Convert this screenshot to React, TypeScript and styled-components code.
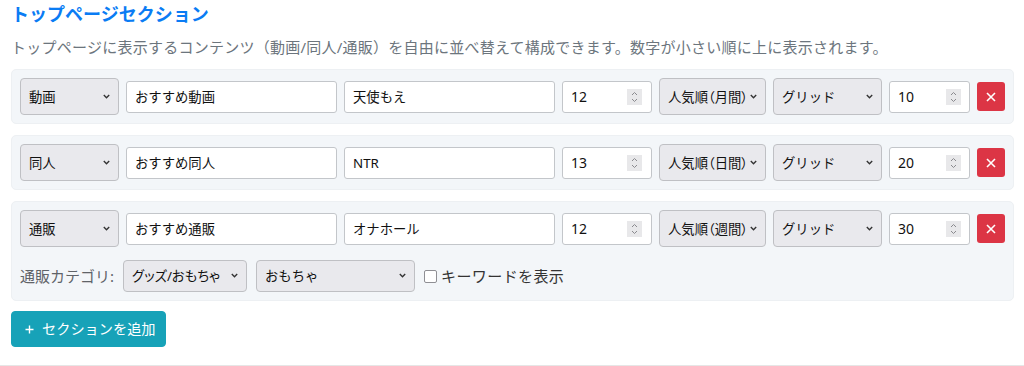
import React from "react";
import styled, { createGlobalStyle } from "styled-components";

const GlobalStyle = createGlobalStyle`
  html, body { margin: 0; padding: 0; background: #fff; }
  body { font-family: "Noto Sans", "Noto Sans CJK JP", sans-serif; color: #212529; }
  * { box-sizing: border-box; }
`;

const Page = styled.section`
  width: 1024px;
  padding: 0 10px 18px 11px;
  border-bottom: 1px solid #e6e6e6;
`;

const Title = styled.h2`
  margin: 0;
  font-size: 18px;
  line-height: 28px;
  font-weight: 700;
  color: #0a7cf4;
`;

const Description = styled.p`
  margin: 8px 0 10px;
  font-size: 15px;
  line-height: 23px;
  letter-spacing: 0.25px;
  color: #6c757d;
`;

const CardList = styled.div`
  display: flex;
  flex-direction: column;
  gap: 11px;
`;

const Card = styled.div`
  display: flex;
  flex-direction: column;
  gap: 13px;
  padding: 8px;
  background: #f3f6f9;
  border: 1px solid #edf0f3;
  border-radius: 5px;
`;

const Row = styled.div<{ $gap?: number }>`
  display: flex;
  align-items: center;
  gap: ${(p) => p.$gap ?? 7}px;
`;

const SelectWrap = styled.span<{ $w: number; $h?: number }>`
  position: relative;
  display: inline-flex;
  flex: none;
  width: ${(p) => p.$w}px;
  height: ${(p) => p.$h ?? 37}px;
`;

const Select = styled.select<{ $palt?: boolean }>`
  appearance: none;
  -webkit-appearance: none;
  width: 100%;
  height: 100%;
  padding: 0 14px 0 8px;
  background: #e9e9ed;
  border: 1px solid #bfc0c4;
  border-radius: 4px;
  font-family: "Noto Sans", "Noto Sans CJK JP", sans-serif;
  font-size: 13.33px;
  font-feature-settings: ${(p) => (p.$palt ? '"palt"' : "normal")};
  color: #111;
  outline: none;
`;

const Chevron = styled.svg`
  position: absolute;
  right: 9px;
  top: 50%;
  width: 7px;
  height: 5px;
  margin-top: -3px;
  pointer-events: none;
`;

const TextInput = styled.input<{ $w: number }>`
  flex: none;
  width: ${(p) => p.$w}px;
  height: 32px;
  padding: 0 8px;
  background: #fff;
  border: 1px solid #c3c6ca;
  border-radius: 3px;
  font-family: "Noto Sans", "Noto Sans CJK JP", sans-serif;
  font-size: 13.33px;
  color: #111;
  outline: none;
`;

const NumberWrap = styled.span<{ $w: number }>`
  position: relative;
  display: inline-flex;
  flex: none;
  width: ${(p) => p.$w}px;
  height: 32px;
`;

const NumberInput = styled.input`
  width: 100%;
  height: 100%;
  padding: 0 8px;
  background: #fff;
  border: 1px solid #c3c6ca;
  border-radius: 3px;
  font-family: "Noto Sans", "Noto Sans CJK JP", sans-serif;
  font-size: 14px;
  color: #111;
  outline: none;
  -moz-appearance: textfield;
  &::-webkit-inner-spin-button,
  &::-webkit-outer-spin-button {
    -webkit-appearance: none;
    margin: 0;
  }
`;

const Spinner = styled.svg<{ $right: number }>`
  position: absolute;
  right: ${(p) => p.$right}px;
  top: 50%;
  width: 15px;
  height: 16px;
  margin-top: -8px;
  pointer-events: none;
`;

const DeleteButton = styled.button`
  flex: none;
  width: 28px;
  height: 29px;
  display: inline-flex;
  align-items: center;
  justify-content: center;
  padding: 0;
  background: #dc3545;
  border: none;
  border-radius: 3px;
  cursor: pointer;
`;

const FieldLabel = styled.span`
  font-size: 15px;
  line-height: 20px;
  color: #5f6368;
  white-space: nowrap;
`;

const CheckLabel = styled.label`
  display: inline-flex;
  align-items: center;
  gap: 4px;
  font-size: 15px;
  line-height: 20px;
  letter-spacing: 0.4px;
  color: #333;
`;

const Checkbox = styled.input`
  appearance: none;
  -webkit-appearance: none;
  margin: 0;
  width: 13px;
  height: 13px;
  background: #fff;
  border: 1px solid #8f8f94;
  border-radius: 2px;
`;

const AddButton = styled.button`
  margin-top: 10px;
  display: flex;
  width: fit-content;
  align-items: center;
  gap: 8px;
  height: 36px;
  padding: 0 9px 0 13px;
  background: #17a2b8;
  border: 1px solid #17a2b8;
  border-radius: 4px;
  color: #fff;
  font-family: "Noto Sans", "Noto Sans CJK JP", sans-serif;
  font-size: 14.2px;
  line-height: 22px;
  cursor: pointer;
`;

const ChevronIcon = () => (
  <Chevron viewBox="0 0 7 5">
    <path d="M0.8 1l2.7 2.7L6.2 1" fill="none" stroke="#333" strokeWidth="1.4" />
  </Chevron>
);

const SpinnerIcon = ({ right }: { right: number }) => (
  <Spinner $right={right} viewBox="0 0 15 16">
    <rect x="0" y="0" width="15" height="16" fill="#e8e8ea" />
    <path d="M5 6l2.5-2.5L10 6" fill="none" stroke="#8a8a8e" strokeWidth="1" />
    <path d="M5 10l2.5 2.5L10 10" fill="none" stroke="#8a8a8e" strokeWidth="1" />
  </Spinner>
);

const Dropdown = ({
  w,
  h,
  value,
  options,
  palt,
}: {
  w: number;
  h?: number;
  value: string;
  options: string[];
  palt?: boolean;
}) => (
  <SelectWrap $w={w} $h={h}>
    <Select defaultValue={value} $palt={palt}>
      {options.map((o) => (
        <option key={o} value={o}>
          {o}
        </option>
      ))}
    </Select>
    <ChevronIcon />
  </SelectWrap>
);

const NumberField = ({ w, value, spinRight }: { w: number; value: number; spinRight: number }) => (
  <NumberWrap $w={w}>
    <NumberInput type="number" defaultValue={value} />
    <SpinnerIcon right={spinRight} />
  </NumberWrap>
);

const sections = [
  { type: "動画", title: "おすすめ動画", keyword: "天使もえ", count: 12, sort: "人気順（月間）", layout: "グリッド", order: 10, shop: false },
  { type: "同人", title: "おすすめ同人", keyword: "NTR", count: 13, sort: "人気順（日間）", layout: "グリッド", order: 20, shop: false },
  { type: "通販", title: "おすすめ通販", keyword: "オナホール", count: 12, sort: "人気順（週間）", layout: "グリッド", order: 30, shop: true },
];

export default function App() {
  return (
    <>
      <GlobalStyle />
      <Page>
        <Title>トップページセクション</Title>
        <Description>
          トップページに表示するコンテンツ（動画/同人/通販）を自由に並べ替えて構成できます。数字が小さい順に上に表示されます。
        </Description>
        <CardList>
          {sections.map((s) => (
            <Card key={s.order}>
              <Row>
                <Dropdown w={99} value={s.type} options={["動画", "同人", "通販"]} />
                <TextInput $w={211} defaultValue={s.title} />
                <TextInput $w={211} defaultValue={s.keyword} />
                <NumberField w={90} value={s.count} spinRight={10} />
                <Dropdown
                  w={107}
                  palt
                  value={s.sort}
                  options={["人気順（日間）", "人気順（週間）", "人気順（月間）", "新着順"]}
                />
                <Dropdown w={109} value={s.layout} options={["グリッド", "リスト"]} />
                <NumberField w={81} value={s.order} spinRight={9} />
                <DeleteButton aria-label="削除">
                  <svg width="10" height="10" viewBox="0 0 10 10">
                    <path d="M1 1l8 8M9 1l-8 8" stroke="#fff" strokeWidth="1.6" />
                  </svg>
                </DeleteButton>
              </Row>
              {s.shop && (
                <Row $gap={9}>
                  <FieldLabel>通販カテゴリ:</FieldLabel>
                  <Dropdown w={124} h={32} palt value="グッズ/おもちゃ" options={["グッズ/おもちゃ", "DVD"]} />
                  <Dropdown w={159} h={32} value="おもちゃ" options={["おもちゃ", "グッズ"]} />
                  <CheckLabel>
                    <Checkbox type="checkbox" />
                    キーワードを表示
                  </CheckLabel>
                </Row>
              )}
            </Card>
          ))}
        </CardList>
        <AddButton>
          <svg width="9" height="9" viewBox="0 0 9 9">
            <path d="M4.5 0.5v8M0.5 4.5h8" stroke="#fff" strokeWidth="1.4" />
          </svg>
          セクションを追加
        </AddButton>
      </Page>
    </>
  );
}
